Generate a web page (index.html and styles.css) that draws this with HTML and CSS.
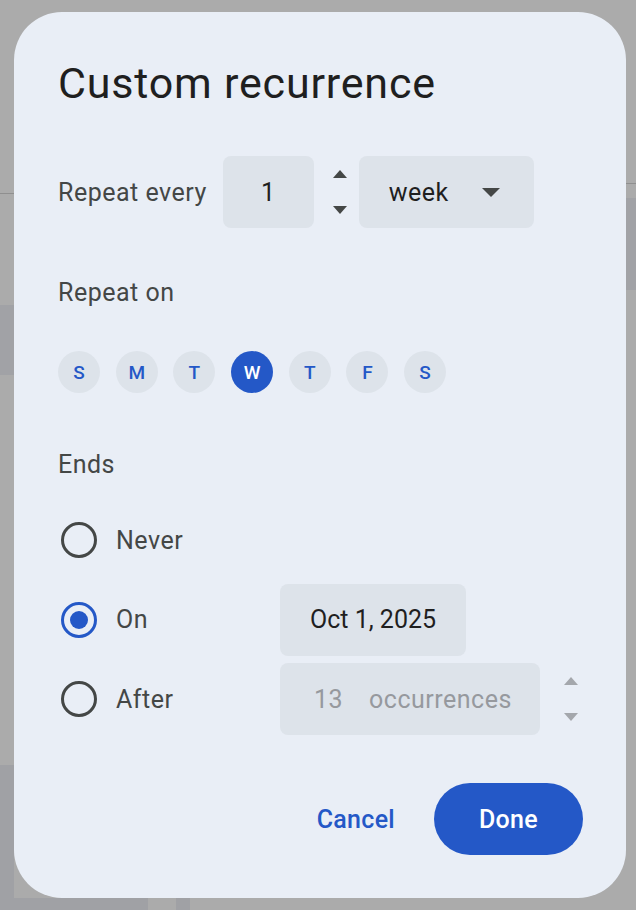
FILE: index.html
```html
<!DOCTYPE html>
<html lang="en">
<head>
    <meta charset="UTF-8">
    <meta name="viewport" content="width=device-width, initial-scale=1.0">
    <title>Custom recurrence</title>
    <link rel="stylesheet" href="styles.css">
</head>
<body>
    <div class="dialog">
        <h1 class="title">Custom recurrence</h1>

        <!-- 繰り返し間隔 -->
        <div class="repeat-row">
            <span class="label">Repeat every</span>
            <div class="field num">1</div>
            <div class="spinner">
                <svg width="14" height="8" viewBox="0 0 14 8"><path d="M0 8 7 0 14 8Z"/></svg>
                <svg width="14" height="8" viewBox="0 0 14 8"><path d="M0 0h14L7 8Z"/></svg>
            </div>
            <div class="field select">
                <span>week</span>
                <svg width="18" height="9" viewBox="0 0 18 9"><path d="M0 0h18L9 9Z"/></svg>
            </div>
        </div>

        <div class="section-label repeat-on">Repeat on</div>
        <div class="days">
            <span class="day">S</span>
            <span class="day">M</span>
            <span class="day">T</span>
            <span class="day active">W</span>
            <span class="day">T</span>
            <span class="day">F</span>
            <span class="day">S</span>
        </div>

        <div class="section-label ends-label">Ends</div>
        <div class="ends">
            <div class="end-row">
                <span class="radio"><span class="circle"></span></span>
                <span class="end-text">Never</span>
            </div>
            <div class="end-row">
                <span class="radio checked"><span class="circle"></span></span>
                <span class="end-text">On</span>
                <div class="field date">Oct 1, 2025</div>
            </div>
            <div class="end-row">
                <span class="radio"><span class="circle"></span></span>
                <span class="end-text">After</span>
                <div class="field count">
                    <span class="count-num">13</span>
                    <span class="count-unit">occurrences</span>
                </div>
                <div class="spinner disabled">
                    <svg width="14" height="8" viewBox="0 0 14 8"><path d="M0 8 7 0 14 8Z"/></svg>
                    <svg width="14" height="8" viewBox="0 0 14 8"><path d="M0 0h14L7 8Z"/></svg>
                </div>
            </div>
        </div>

        <div class="actions">
            <button class="btn text">Cancel</button>
            <button class="btn filled">Done</button>
        </div>
    </div>
</body>
</html>
```

FILE: styles.css
```css
/* 背景（モーダルの後ろ） */
body {
    margin: 0;
    width: 636px;
    height: 910px;
    box-sizing: border-box;
    padding: 12px 10px 12px 14px;
    font-family: Roboto, "Noto Sans", sans-serif;
    background:
        linear-gradient(#8f8f8f, #8f8f8f) 0 193px / 14px 1px no-repeat,
        linear-gradient(#8f8f8f, #8f8f8f) 626px 183px / 10px 1px no-repeat,
        linear-gradient(#a1a2a6, #a1a2a6) 0 305px / 14px 70px no-repeat,
        linear-gradient(#a1a2a6, #a1a2a6) 626px 198px / 10px 92px no-repeat,
        linear-gradient(#a0a1a5, #a0a1a5) 0 765px / 14px 145px no-repeat,
        linear-gradient(#a0a1a5, #a0a1a5) 0 898px / 148px 12px no-repeat,
        linear-gradient(#a0a1a5, #a0a1a5) 176px 898px / 14px 12px no-repeat,
        #ababab;
}

/* ダイアログ本体 */
.dialog {
    box-sizing: border-box;
    width: 612px;
    height: 886px;
    background-color: #e9eef6;
    border-radius: 48px;
    padding: 43px 43px 43px 44px;
    display: flex;
    flex-direction: column;
    letter-spacing: 0.5px;
}

.title {
    margin: 0;
    font-size: 43px;
    font-weight: 400;
    line-height: 56px;
    letter-spacing: 0.8px;
    color: #1f1f1f;
}

/* 入力フィールド共通 */
.field {
    box-sizing: border-box;
    height: 72px;
    border-radius: 8px;
    background-color: #dde3ea;
    display: flex;
    align-items: center;
    font-size: 25px;
    color: #1f1f1f;
}

.repeat-row {
    margin-top: 45px;
    height: 72px;
    display: flex;
    align-items: center;
}

.label {
    font-size: 25px;
    color: #444746;
    margin-right: 16px;
}

.num {
    width: 91px;
    justify-content: center;
}

.spinner {
    width: 14px;
    height: 72px;
    margin: 0 12px 0 19px;
    display: flex;
    flex-direction: column;
    justify-content: center;
    gap: 28px;
    fill: #444746;
}

.spinner svg {
    display: block;
}

.spinner.disabled {
    fill: #a4a7ac;
    margin: 0 0 0 18px;
}

.select {
    width: 175px;
    padding: 0 34px 0 30px;
    justify-content: space-between;
}

.select svg {
    fill: #444746;
}

/* セクション見出し */
.section-label {
    font-size: 25px;
    line-height: 30px;
    color: #444746;
}

.repeat-on {
    margin-top: 50px;
}

.ends-label {
    margin-top: 57px;
}

/* 曜日 */
.days {
    margin-top: 43px;
    display: flex;
    gap: 15.7px;
}

.day {
    width: 42px;
    height: 42px;
    border-radius: 50%;
    background-color: #dde3ea;
    color: #2458c7;
    font-size: 19px;
    font-weight: 500;
    letter-spacing: 0;
    display: flex;
    align-items: center;
    justify-content: center;
}

.day.active {
    background-color: #2458c7;
    color: #fff;
}

/* 終了条件 */
.ends {
    margin-top: 24px;
    display: flex;
    flex-direction: column;
    gap: 7.5px;
}

.end-row {
    height: 72px;
    display: grid;
    grid-template-columns: 42px 180px auto auto;
    align-items: center;
}

.radio {
    width: 42px;
    height: 42px;
    display: flex;
    align-items: center;
    justify-content: center;
}

.circle {
    box-sizing: border-box;
    width: 36px;
    height: 36px;
    border: 3.6px solid #444746;
    border-radius: 50%;
    display: flex;
    align-items: center;
    justify-content: center;
}

.radio.checked .circle {
    border-color: #2458c7;
}

.radio.checked .circle::after {
    content: "";
    width: 18px;
    height: 18px;
    border-radius: 50%;
    background-color: #2458c7;
}

.end-text {
    padding-left: 16px;
    font-size: 25px;
    color: #444746;
}

.date {
    width: 186px;
    padding-left: 30px;
    letter-spacing: 0;
}

.count {
    width: 260px;
    padding-left: 34px;
    color: #96999e;
}

.count-unit {
    margin-left: 26px;
}

/* ボタン */
.actions {
    margin-top: auto;
    display: flex;
    justify-content: flex-end;
    gap: 15px;
}

.btn {
    height: 72px;
    border: none;
    border-radius: 36px;
    font-family: inherit;
    font-size: 25px;
    font-weight: 500;
    letter-spacing: 0.3px;
    cursor: pointer;
}

.btn.text {
    padding: 0 24px;
    background: none;
    color: #2458c7;
}

.btn.filled {
    width: 149px;
    background-color: #2458c7;
    color: #fff;
}
```
